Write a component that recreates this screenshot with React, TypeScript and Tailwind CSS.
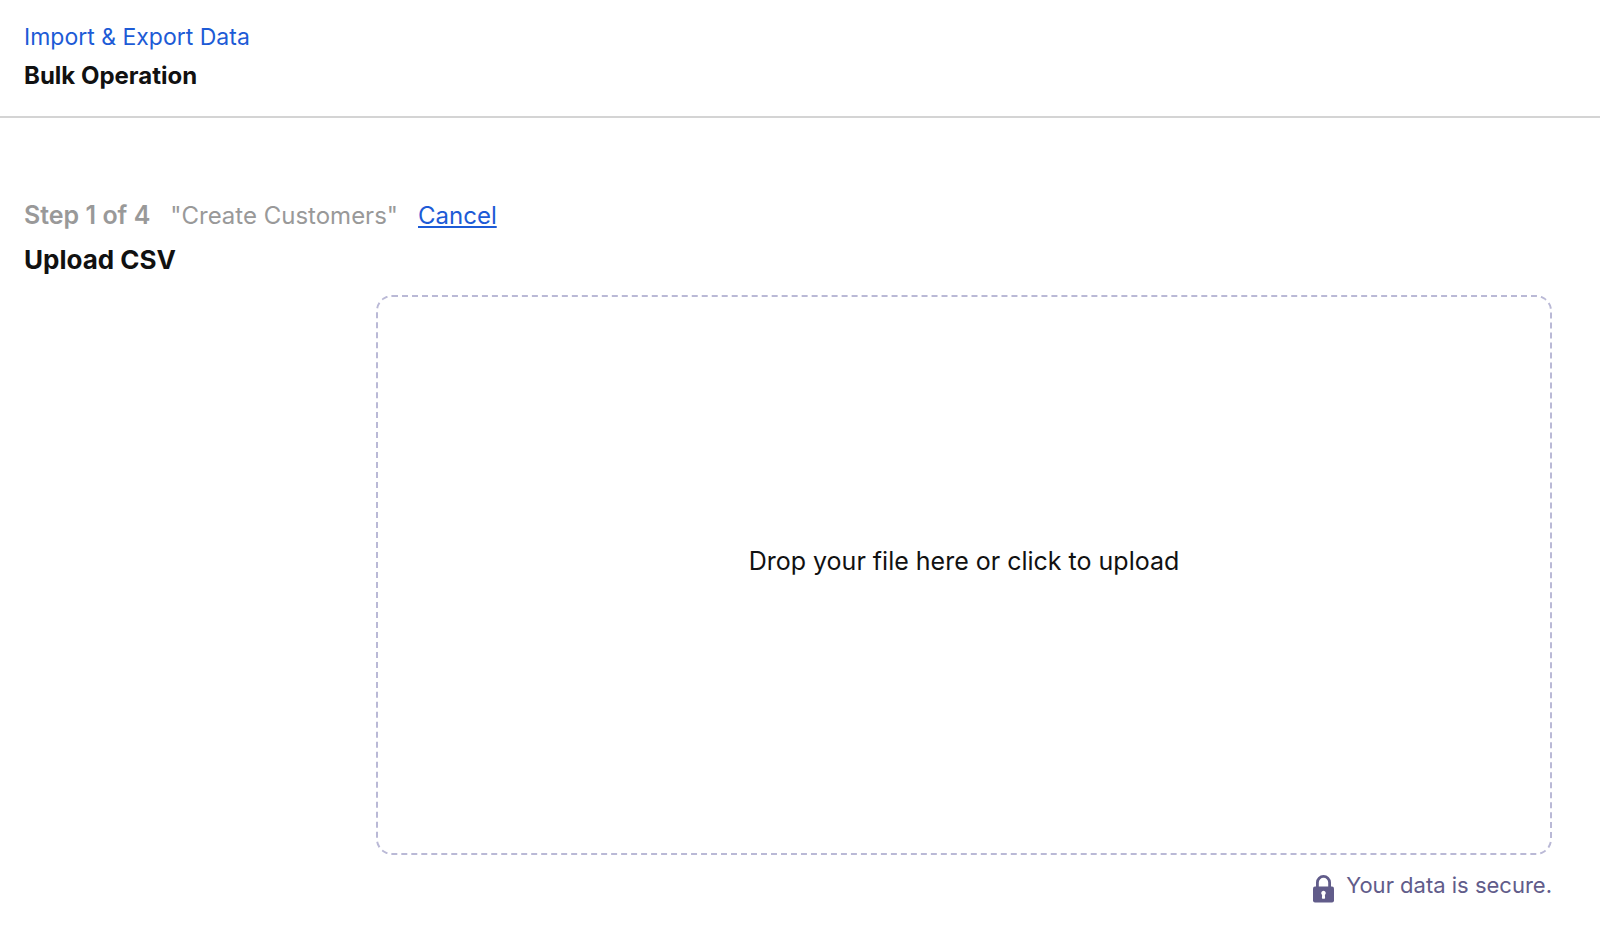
const LockIcon = () => {
    return (
        <svg className="w-[21px] h-7 shrink-0" viewBox="0 0 21 28" aria-hidden="true">
            <path d="M4.400 12V7.500a6.100 6.100 0 0 1 12.200 0V12" fill="none" stroke="#615c8a" strokeWidth="2.800" />
            <rect x="0" y="11.500" width="21" height="16" rx="2" fill="#615c8a" />
            <path d="M10.500 15.800a2.300 2.300 0 0 0-1.400 4.100l-.2 3.100q0 .8.800.8h1.600q.8 0 .8-.8l-.2-3.100a2.300 2.300 0 0 0-1.400-4.100z" fill="#fff" />
        </svg>
    )
}

const Header = () => {
    return (
        <header className="px-6 pt-[23px] pb-6 border-b-2 border-[#d4d4d4]">
            <a href="#" className="block w-fit text-[23px] leading-7 text-[#1d5bd6]">Import &amp; Export Data</a>
            <h1 className="mt-[9px] text-2xl font-bold">Bulk Operation</h1>
        </header>
    )
}

const App = () => {
    return (
        <div className="bg-white text-[#111] font-[Inter,sans-serif]">
            <Header />
            <main className="px-6 pt-[81px] pb-6">
                <div className="flex items-baseline gap-5 text-2xl text-[#999]">
                    <span className="text-[25px] leading-8 font-semibold">Step 1 of 4</span>
                    <span>"Create Customers"</span>
                    <a href="#" className="text-[#1d5bd6] underline">Cancel</a>
                </div>
                <h2 className="mt-3 text-[26px] leading-8 font-bold">Upload CSV</h2>
                <div className="mt-[19px] ml-88 mr-6">
                    <label className="flex items-center justify-center h-140 pb-7 border-2 border-dashed border-[#bab9d6] rounded-2xl text-[25px] leading-8 cursor-pointer">
                        <input type="file" accept=".csv" className="sr-only" />
                        Drop your file here or click to upload
                    </label>
                    <p className="flex items-end justify-end gap-3 mt-4 text-[22px] text-[#615c8a]">
                        <LockIcon />
                        <span className="pb-1 leading-7">Your data is secure.</span>
                    </p>
                </div>
            </main>
        </div>
    )
}

export default App
